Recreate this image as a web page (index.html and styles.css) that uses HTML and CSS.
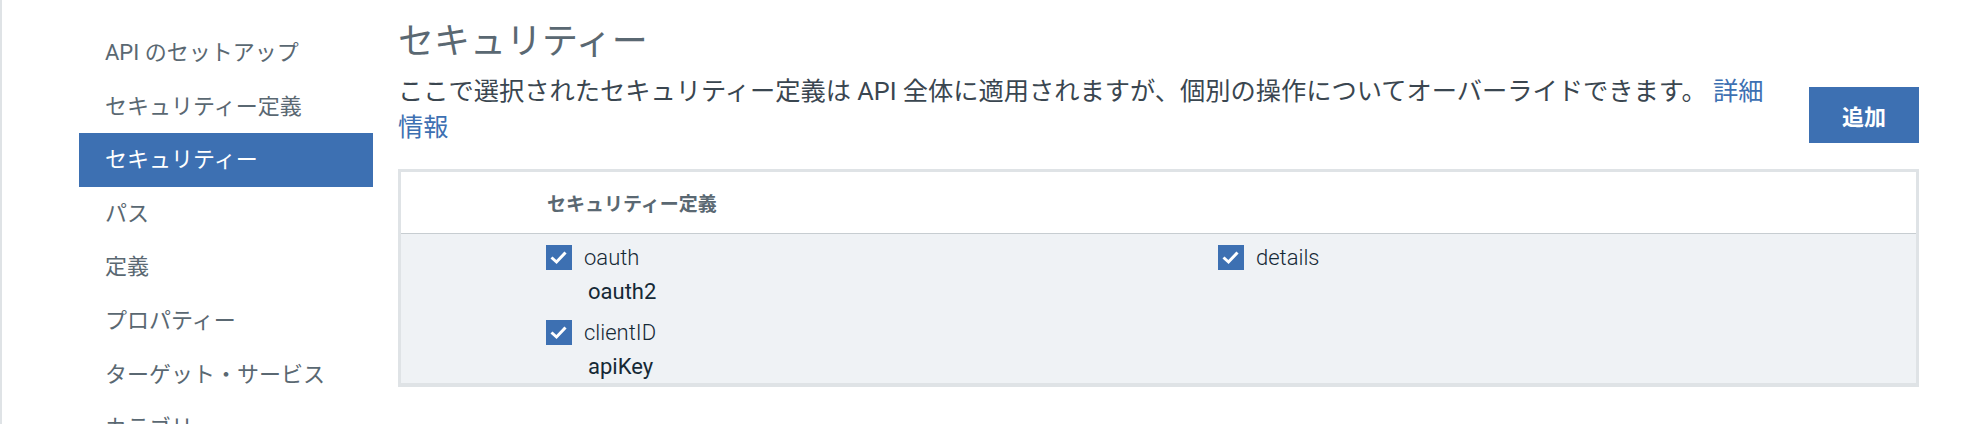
FILE: index.html
```html
<!DOCTYPE html>
<html lang="ja">
<head>
<meta charset="utf-8">
<title>セキュリティー</title>
<link rel="stylesheet" href="styles.css">
</head>
<body>
<div class="app">
  <nav class="sidebar">
    <ul class="nav">
      <li class="nav-item">API のセットアップ</li>
      <li class="nav-item">セキュリティー定義</li>
      <li class="nav-item active">セキュリティー</li>
      <li class="nav-item">パス</li>
      <li class="nav-item">定義</li>
      <li class="nav-item">プロパティー</li>
      <li class="nav-item">ターゲット・サービス</li>
      <li class="nav-item">カテゴリ</li>
    </ul>
  </nav>
  <main class="main">
    <h1 class="title">セキュリティー</h1>
    <div class="intro">
      <p class="desc">ここで選択されたセキュリティー定義は API 全体に適用されますが、個別の操作についてオーバーライドできます。 <a class="link" href="#">詳細情報</a></p>
      <button class="btn" type="button">追加</button>
    </div>
    <div class="table">
      <div class="thead">
        <div class="th-spacer"></div>
        <div class="th">セキュリティー定義</div>
      </div>
      <div class="tbody">
        <div class="td-spacer"></div>
        <div class="col">
          <div class="item">
            <div class="check-row">
              <svg class="cb" width="26" height="25" viewBox="0 0 26 25"><rect width="26" height="25" fill="#3d70b2"/><path d="M5.5 12.5 L10.5 17 L19.5 7.5" fill="none" stroke="#fff" stroke-width="3"/></svg>
              <span class="label">oauth</span>
            </div>
            <div class="sub">oauth2</div>
          </div>
          <div class="item">
            <div class="check-row">
              <svg class="cb" width="26" height="25" viewBox="0 0 26 25"><rect width="26" height="25" fill="#3d70b2"/><path d="M5.5 12.5 L10.5 17 L19.5 7.5" fill="none" stroke="#fff" stroke-width="3"/></svg>
              <span class="label">clientID</span>
            </div>
            <div class="sub">apiKey</div>
          </div>
        </div>
        <div class="col">
          <div class="item">
            <div class="check-row">
              <svg class="cb" width="26" height="25" viewBox="0 0 26 25"><rect width="26" height="25" fill="#3d70b2"/><path d="M5.5 12.5 L10.5 17 L19.5 7.5" fill="none" stroke="#fff" stroke-width="3"/></svg>
              <span class="label">details</span>
            </div>
          </div>
        </div>
      </div>
    </div>
  </main>
</div>
</body>
</html>
```
FILE: styles.css
```css
* { box-sizing: border-box; }
html, body { margin: 0; padding: 0; background: #fff; }
body {
  font-family: Roboto, "Noto Sans CJK JP", sans-serif;
  height: 424px;
  overflow: hidden;
}
.app {
  display: flex;
  border-left: 2px solid #dfe3e6;
  height: 424px;
  overflow: hidden;
}
.sidebar {
  width: 371px;
  padding-left: 77px;
  padding-top: 26px;
  flex: none;
}
.nav { list-style: none; margin: 0; padding: 0; }
.nav-item {
  height: 53.6px;
  line-height: 53.6px;
  padding-left: 26px;
  font-size: 22px;
  color: #5a6872;
  white-space: nowrap;
}
.nav-item.active { background: #3d70b2; color: #fff; }
.main {
  margin-left: 25px;
  width: 1521px;
  flex: none;
}
.title {
  margin: 19px 0 0;
  font-size: 36px;
  font-weight: 400;
  line-height: 46px;
  color: #5a6872;
}
.intro {
  display: flex;
  align-items: flex-start;
  gap: 33px;
  margin-top: 9px;
}
.desc {
  flex: 1;
  margin: 0;
  font-size: 25.25px;
  line-height: 36px;
  color: #3a4650;
}
.link { color: #3d70b2; text-decoration: none; }
.btn {
  flex: none;
  margin-top: 13px;
  width: 110px;
  height: 56px;
  border: 0;
  background: #3d70b2;
  color: #fff;
  font-family: Roboto, "Noto Sans CJK JP", sans-serif;
  font-size: 22px;
  font-weight: 700;
}
.table {
  margin-top: 23px;
  border: 3px solid #dfe3e6;
  border-bottom-width: 4px;
}
.thead {
  display: grid;
  grid-template-columns: 146px 1fr;
  height: 62px;
  align-items: center;
  border-bottom: 1px solid #c7cdd1;
  background: #fff;
}
.th {
  font-size: 19px;
  font-weight: 700;
  color: #5a6872;
}
.tbody {
  display: grid;
  grid-template-columns: 145px 672px 1fr;
  background: #eff2f5;
  padding: 11px 0 0;
}
.col {
  display: flex;
  flex-direction: column;
  gap: 12px;
}
.check-row {
  display: flex;
  align-items: center;
  gap: 12px;
  height: 25px;
}
.cb { display: block; flex: none; }
.label {
  font-size: 22px;
  font-weight: 300;
  color: #152935;
}
.sub {
  padding-left: 42px;
  margin-top: 5px;
  font-size: 22px;
  line-height: 33px;
  color: #152935;
}
```
